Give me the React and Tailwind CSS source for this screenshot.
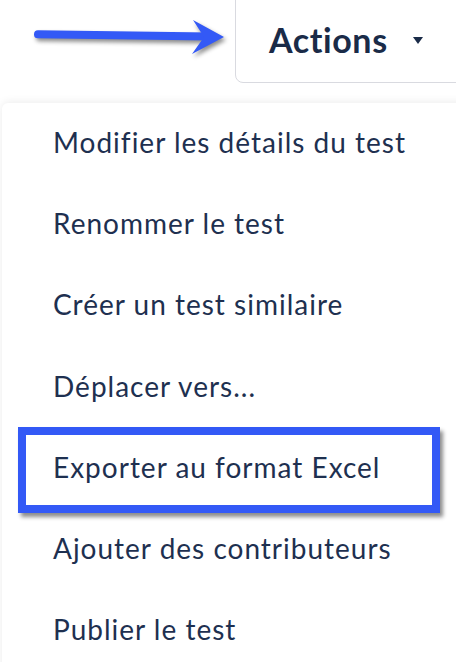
import React from 'react';

const items = [
  'Modifier les détails du test',
  'Renommer le test',
  'Créer un test similaire',
  'Déplacer vers...',
  'Exporter au format Excel',
  'Ajouter des contributeurs',
  'Publier le test',
];

const Arrow = () => (
  <svg
    className="ml-[30px] mt-[10px] h-[50px] w-[200px] shrink-0 self-start drop-shadow-[2px_3px_2px_rgba(0,0,0,0.45)]"
    viewBox="0 0 200 50"
  >
    <path d="M8 24.3 L180 26.5" stroke="#3359f6" strokeWidth="8" strokeLinecap="round" fill="none" />
    <path d="M163 10 L194 27 L162 44 L174 27 Z" fill="#3359f6" />
  </svg>
);

export default function App() {
  return (
    <div
      className="relative h-[662px] w-[456px] overflow-hidden bg-white text-[#1e3050]"
      style={{ fontFamily: 'Lato, "Open Sans", sans-serif' }}
    >
      {/* Header */}
      <div className="flex h-[83px]">
        <Arrow />
        <button className="-mt-[8px] ml-[5px] flex h-[91px] w-[240px] shrink-0 items-center rounded-[8px] border border-[#d9dae0] bg-white pl-[33px] pt-[4px]">
          <span className="text-[34px] font-bold leading-none tracking-[0.6px] text-[#1a2b48]">Actions</span>
          <svg className="ml-[25px] mt-[1px] h-[7px] w-[10px]" viewBox="0 0 10 7">
            <path d="M0 0 L10 0 L5 7 Z" fill="#1a2b48" />
          </svg>
        </button>
      </div>

      {/* Menu */}
      <div className="ml-[2px] mt-[20px] h-[600px] w-[470px] rounded-[6px] bg-white shadow-[0_-1px_8px_rgba(0,0,0,0.08)]">
        {items.map((label, i) => (
          <div key={label} className="relative flex h-[81.2px] items-center pb-[3px] pl-[51px]">
            <span className="text-[28px] font-normal leading-none tracking-[1px]">{label}</span>
            {i === 4 && (
              <div className="absolute -top-[1px] left-[16px] h-[86px] w-[422px] border-[8px] border-[#3359f6] shadow-[3px_4px_4px_rgba(0,0,0,0.45)]" />
            )}
          </div>
        ))}
      </div>
    </div>
  );
}
